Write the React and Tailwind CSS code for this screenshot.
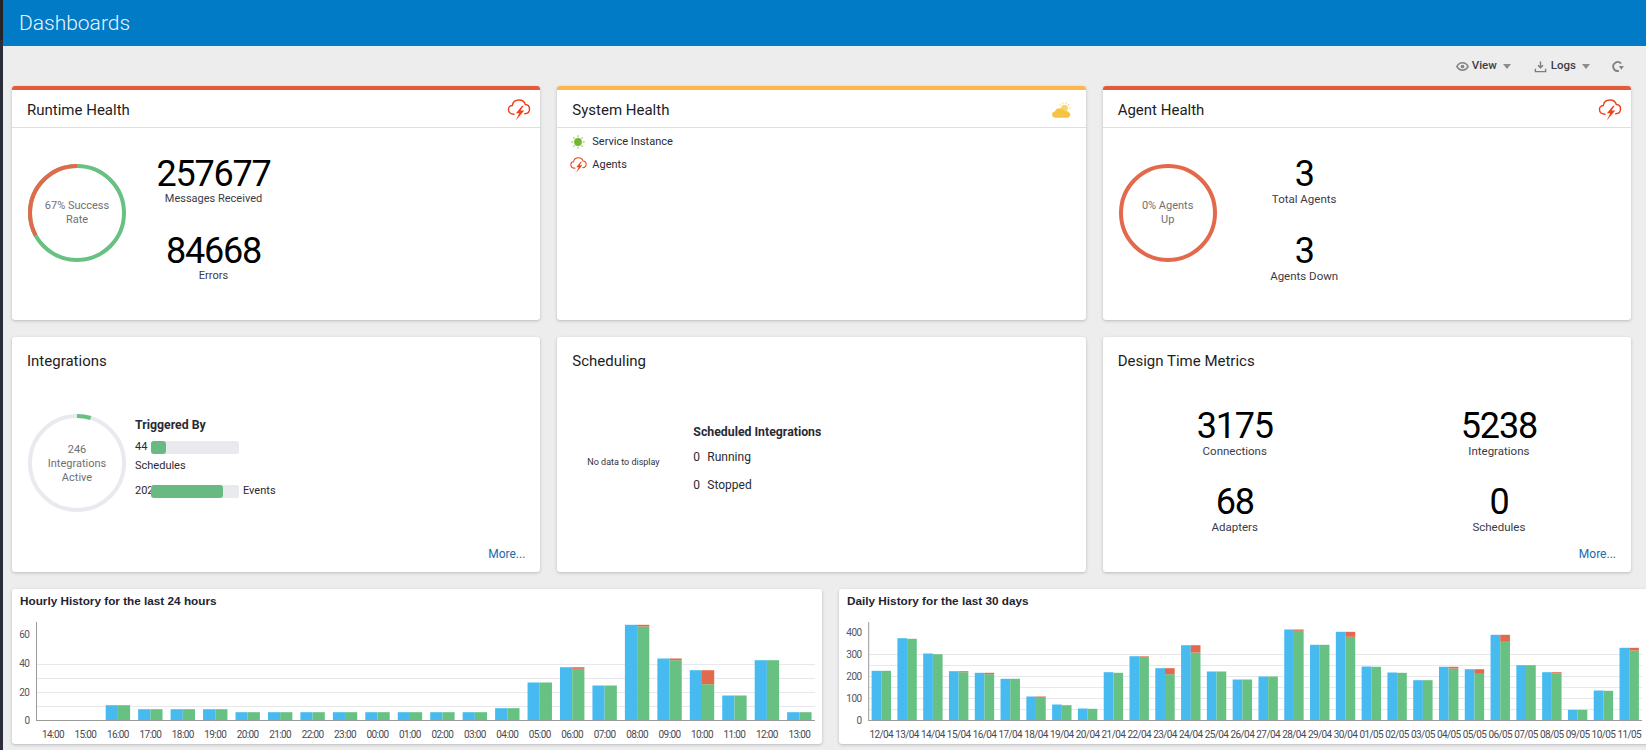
import React from "react";

const RED = "#e3694c", GREEN = "#67c183", BLUE = "#47bbf0";

function CloudBolt({ className = "w-[24px] h-[22px]" }) {
  return (
    <svg viewBox="0 0 24 23" className={className}>
      <path d="M6.8 16C3.5 16 1 14 1 11C1 8.5 3 6.8 5 6.8C5.5 3.2 8.5 1 12 1C15 1 17.8 3 18.6 5.8C21.2 6 23 8 23 10.5C23 13.2 21 15.3 18 15.5" fill="none" stroke="#f0401b" strokeWidth="1.5" strokeLinecap="round" />
      <path d="M15.2 7L8.8 14.8H12.3L8.6 22.5L17.5 12H13.6L16.8 7Z" fill="#f0401b" />
    </svg>
  );
}

function Sun() {
  const rays = [0, 45, 90, 135, 180, 225, 270, 315];
  return (
    <svg viewBox="0 0 14 14" className="w-[14px] h-[14px]">
      <circle cx="7" cy="7" r="3.9" fill="#76b52f" />
      {rays.map((a) => (
        <line key={a} x1="7" y1="0.3" x2="7" y2="2.2" stroke="#a9d27e" strokeWidth="1.3" transform={`rotate(${a} 7 7)`} />
      ))}
    </svg>
  );
}

function CloudSun() {
  const rays = [-50, -18, 15, 48, 85];
  return (
    <svg viewBox="0 0 20 17" className="w-[20px] h-[17px]">
      {rays.map((a) => (
        <line key={a} x1="12.5" y1="0" x2="12.5" y2="2" stroke="#f9dc8e" strokeWidth="1.1" transform={`rotate(${a} 12.5 6.5)`} />
      ))}
      <circle cx="12.5" cy="6.5" r="3.4" fill="#f7d36a" />
      <path d="M3.5 15.8C1.5 15.8 0 14.3 0 12.5C0 10.8 1.3 9.5 3 9.4C3.6 7.4 5.4 6.2 7.5 6.2C9.6 6.2 11.2 7.5 11.9 9.1C14.2 8.6 18 9.4 18.3 12.5C18.4 14.4 17 15.8 15 15.8Z" fill="#f6c343" />
    </svg>
  );
}

function Ring({ segments, track = "#e8eaf0", lines }) {
  const r = 47, c = 2 * Math.PI * r;
  return (
    <div className="relative w-[98px] h-[98px] shrink-0">
      <svg viewBox="0 0 98 98" className="w-[98px] h-[98px] -rotate-90">
        <circle cx="49" cy="49" r={r} fill="none" stroke={track} strokeWidth="4" />
        {segments.map((s, i) => (
          <circle key={i} cx="49" cy="49" r={r} fill="none" stroke={s.color} strokeWidth="4"
            strokeDasharray={`${(s.len / 100) * c} ${c}`} strokeDashoffset={`${-(s.start / 100) * c}`} />
        ))}
      </svg>
      <div className={`absolute inset-0 flex flex-col items-center justify-center text-[11px] leading-[14px] text-[#6f6f73] ${lines.length > 2 ? "pt-[2px]" : ""}`}>
        {lines.map((l) => <span key={l}>{l}</span>)}
      </div>
    </div>
  );
}

function Card({ title, accent, icon, children }) {
  return (
    <section className="flex-1 min-w-0 bg-white rounded-[3px] overflow-hidden flex flex-col shadow-[0_1px_3px_rgba(60,70,90,0.3)]">
      {accent && <div className="h-1 shrink-0" style={{ background: accent }} />}
      {children(title, icon)}
    </section>
  );
}

function Title({ children, icon }) {
  return (
    <header className="h-[38px] shrink-0 pl-[15px] pr-[9px] pt-[3px] flex items-center justify-between border-b border-[#d9e0e8]">
      <h2 className="text-[15px] text-[#1d1d24] font-normal">{children}</h2>
      {icon}
    </header>
  );
}

function Stat({ value, label, small }) {
  return (
    <div className="flex flex-col items-center">
      <span className="text-[36px] leading-[33px] pt-[1px] text-black tracking-[-1.2px]">{value}</span>
      <span className={`leading-[16px] text-[#3b3b45] ${small ? "text-[11px]" : "text-[11.5px]"}`}>{label}</span>
    </div>
  );
}

function HealthCard({ accent, icon, title, ring, stats, small }) {
  return (
    <Card accent={accent} title={title} icon={icon}>
      {(t, ic) => (
        <>
          <Title icon={ic}>{t}</Title>
          <div className="flex-1 flex items-start pl-[16px] pt-[26px]">
            <div className="mt-[10px]">{ring}</div>
            <div className="flex flex-col gap-[27px] ml-[22px] w-[131px] mt-[3px]">
              {stats.map((s) => <Stat key={s.label} value={s.value} label={s.label} small={small} />)}
            </div>
          </div>
        </>
      )}
    </Card>
  );
}

function More() {
  return <a className="absolute right-[15px] bottom-[10px] text-[12px] leading-[16px] text-[#1a6bb0]">More...</a>;
}

function Chart({ title, labels, bars, ticks, grid, axisX, start, step, barW, right, className }) {
  const base = 131.5;
  const toY = (v) => base - v;
  return (
    <section className={`bg-white rounded-[3px] overflow-hidden h-[155px] shadow-[0_1px_3px_rgba(60,70,90,0.3)] relative ${className}`}>
      <h3 className="pl-[8px] pt-[4px] text-[11.75px] leading-[15px] font-bold text-[#1f2430] font-['Liberation_Sans',sans-serif]">{title}</h3>
      <svg width="830" height="155" className="absolute left-0 top-0 pointer-events-none">
        {grid.map((g) => <line key={g} x1={axisX} x2={right} y1={toY(g)} y2={toY(g)} stroke="#e6e8ec" strokeWidth="1" />)}
        {bars.map((b, i) => {
          const cx = start + step * i;
          return (
            <g key={i}>
              <rect x={cx - barW} y={toY(b[0])} width={barW} height={b[0]} fill={BLUE} />
              <rect x={cx} y={toY(b[1])} width={barW} height={b[1]} fill={GREEN} />
              {b[2] > 0 && <rect x={cx} y={toY(b[1] + b[2])} width={barW} height={b[2]} fill={RED} />}
            </g>
          );
        })}
        <line x1={axisX} x2={axisX} y1="33" y2={base + 0.5} stroke="#9a9a9a" strokeWidth="1" />
        <line x1={axisX} x2={right} y1={base} y2={base} stroke="#9a9a9a" strokeWidth="1" />
        {ticks.map((t) => (
          <text key={t.l} x={axisX - 7} y={toY(t.v) + 3} textAnchor="end" fontSize="10" letterSpacing="-0.5" fill="#55555c">{t.l}</text>
        ))}
        {labels.map((l, i) => (
          <text key={l} x={start + step * i} y="149" textAnchor="middle" fontSize="10" letterSpacing="-0.6" fill="#4a4a52">{l}</text>
        ))}
      </svg>
    </section>
  );
}

const hours = ["14:00","15:00","16:00","17:00","18:00","19:00","20:00","21:00","22:00","23:00","00:00","01:00","02:00","03:00","04:00","05:00","06:00","07:00","08:00","09:00","10:00","11:00","12:00","13:00"];
const hourly = [[0,0,0],[0,0,0],[15.3,15.3,0],[11.3,11.3,0],[11.3,11.3,0],[11.3,11.3,0],[8.3,8.3,0],[8.3,8.3,0],[8.3,8.3,0],[8.3,8.3,0],[8.3,8.3,0],[8.3,8.3,0],[8.3,8.3,0],[8.3,8.3,0],[12.3,12.3,0],[38,38,0],[53.3,51.7,1.6],[35,35,0],[95.7,94,1.7],[62,60.3,1.7],[50.3,36.3,14],[25,25,0],[60.3,60.3,0],[8.3,8.3,0]];
const days = ["12/04","13/04","14/04","15/04","16/04","17/04","18/04","19/04","20/04","21/04","22/04","23/04","24/04","25/04","26/04","27/04","28/04","29/04","30/04","01/05","02/05","03/05","04/05","05/05","06/05","07/05","08/05","09/05","10/05","11/05"];
const daily = [[49.7,49.7,0],[82.3,81.7,0],[67,66.3,0],[49.3,48.3,1],[47.7,46.3,1.4],[41.7,41.7,0],[24,22.7,1.3],[16,15.3,0],[12,11.7,0],[48.3,47.7,0],[64.3,63.7,0.6],[52.3,46.3,6],[75.3,68,7.3],[49,49,0],[41,41,0],[44,44,0],[91,89.7,1.3],[75.7,75.7,0],[88.7,83.7,5],[54,53.7,0],[48,47.7,0],[40.3,40.3,0],[53.7,52,1.7],[51.3,46.7,4.6],[85.7,78.7,7],[55.3,55.3,0],[48.3,47.3,1],[10.7,10.7,0],[30,29.7,0],[72.7,70,2.7]];

export default function App() {
  return (
    <div className="h-[750px] w-[1646px] overflow-hidden flex bg-[#ededed] text-[12px] font-['Roboto','Noto_Sans',sans-serif]">
      <div className="w-[3px] shrink-0 flex flex-col">
        <div className="h-[40px] bg-[#242428]" />
        <div className="flex-1 bg-[#2c2d3c]" />
      </div>
      <div className="flex-1 min-w-0 flex flex-col">
        <div className="h-[46px] shrink-0 bg-[#027bc7] pl-[16px] pt-[2px] flex items-center">
          <h1 className="text-[21px] font-light text-white/95">Dashboards</h1>
        </div>

        <div className="h-[40px] shrink-0 flex items-center justify-end pr-[22px] text-[#3d3d45] text-[11.5px] font-medium">
          <svg viewBox="0 0 14 14" className="w-[13px] h-[13px] mr-[3px]"><path d="M1 7C2.5 4.3 4.5 3 7 3S11.5 4.3 13 7C11.5 9.7 9.5 11 7 11S2.5 9.7 1 7Z" fill="none" stroke="#85858a" strokeWidth="1.7" /><circle cx="7" cy="7" r="2" fill="#85858a" /></svg>
          <span>View</span>
          <span className="ml-[6px] w-0 h-0 border-x-[4px] border-x-transparent border-t-[5px] border-t-[#8b8b90]" />
          <svg viewBox="0 0 14 14" className="w-[13px] h-[13px] ml-[23px] mr-[4px]"><path d="M7 1.5V8M4.3 5.6L7 8.4L9.7 5.6M1.5 9.5V12.5H12.5V9.5" fill="none" stroke="#7b7b80" strokeWidth="1.5" /></svg>
          <span>Logs</span>
          <span className="ml-[6px] w-0 h-0 border-x-[4px] border-x-transparent border-t-[5px] border-t-[#8b8b90]" />
          <svg viewBox="0 0 14 14" className="w-[13px] h-[13px] ml-[21px]"><path d="M10.8 3.8A4.8 4.8 0 1 0 8.5 11.6" fill="none" stroke="#808085" strokeWidth="2" /><path d="M8.5 6.5H13.8L11.2 10.5Z" fill="#808085" /></svg>
        </div>

        <div className="pl-[9px] pr-[15px] flex flex-col gap-[17px]">
          <div className="h-[234px] flex gap-[17px]">
            <HealthCard accent="#e2593b" title="Runtime Health" icon={<CloudBolt />} small
              ring={<Ring track={GREEN} segments={[{ color: RED, start: 67, len: 33 }]} lines={["67% Success", "Rate"]} />}
              stats={[{ value: "257677", label: "Messages Received" }, { value: "84668", label: "Errors" }]} />
            <Card accent="#fdb54c" title="System Health" icon={<span className="mr-[5px]"><CloudSun /></span>}>
              {(t, ic) => (
                <>
                  <Title icon={ic}>{t}</Title>
                  <ul className="pl-[14px] pt-[2.5px] text-[11px] text-[#2a2a33]">
                    <li className="h-[23px] flex items-center"><span className="w-[21px]"><Sun /></span>Service Instance</li>
                    <li className="h-[23px] flex items-center"><span className="w-[21px] -ml-[1px] mr-[1px]"><CloudBolt className="w-[17px] h-[16px]" /></span>Agents</li>
                  </ul>
                </>
              )}
            </Card>
            <HealthCard accent="#e2593b" title="Agent Health" icon={<CloudBolt />}
              ring={<Ring track={RED} segments={[]} lines={["0% Agents", "Up"]} />}
              stats={[{ value: "3", label: "Total Agents" }, { value: "3", label: "Agents Down" }]} />
          </div>

          <div className="h-[235px] grid grid-cols-3 gap-[17px]">
            <section className="min-w-0 bg-white rounded-[3px] relative shadow-[0_1px_3px_rgba(60,70,90,0.3)] pl-[15px] pt-[14px]">
              <h2 className="text-[15px] leading-[20px] text-[#1d1d24]">Integrations</h2>
              <div className="flex pl-[1px] mt-[43px]">
                <Ring segments={[{ color: GREEN, start: 0, len: 4.7 }]} lines={["246", "Integrations", "Active"]} />
                <div className="ml-[9px] mt-[3px] text-[11px] text-[#2a2a33]">
                  <div className="font-bold text-[12.3px] leading-[16px]">Triggered By</div>
                  <div className="mt-[8px] flex items-center h-[13px]">
                    <span className="w-[16px] shrink-0">44</span>
                    <span className="w-[88px] h-[13px] bg-[#e8eaed] rounded-[2px] block"><span className="block w-[15px] h-[13px] bg-[#69ba82] rounded-[3px]" /></span>
                  </div>
                  <div className="mt-[3px] leading-[16px] pt-[1px]">Schedules</div>
                  <div className="mt-[11px] flex items-center h-[13px]">
                    <span className="w-[16px] shrink-0 overflow-hidden">202</span>
                    <span className="w-[88px] h-[13px] bg-[#e8eaed] rounded-[2px] block shrink-0"><span className="block w-[72px] h-[13px] bg-[#69ba82] rounded-[3px]" /></span>
                    <span className="ml-[4px]">Events</span>
                  </div>
                </div>
              </div>
              <More />
            </section>

            <section className="min-w-0 bg-white rounded-[3px] shadow-[0_1px_3px_rgba(60,70,90,0.3)] pl-[15px] pt-[14px]">
              <h2 className="text-[15px] leading-[20px] text-[#1d1d24]">Scheduling</h2>
              <div className="flex mt-[53px] pl-[15px] text-[#2a2a33]">
                <div className="w-[106px] pt-[32px] text-[9px] text-[#33333a]">No data to display</div>
                <div>
                  <div className="font-bold text-[12.3px] leading-[16px]">Scheduled Integrations</div>
                  <div className="mt-[9px] h-[16px] flex items-center"><span className="w-[14px]">0</span>Running</div>
                  <div className="mt-[12px] h-[16px] flex items-center"><span className="w-[14px]">0</span>Stopped</div>
                </div>
              </div>
            </section>

            <section className="min-w-0 bg-white rounded-[3px] relative shadow-[0_1px_3px_rgba(60,70,90,0.3)] pt-[14px]">
              <h2 className="pl-[15px] text-[15px] leading-[20px] text-[#1d1d24]">Design Time Metrics</h2>
              <div className="grid grid-cols-2 gap-y-[26px] mt-[38px]">
                <Stat value="3175" label="Connections" />
                <Stat value="5238" label="Integrations" />
                <Stat value="68" label="Adapters" />
                <Stat value="0" label="Schedules" />
              </div>
              <More />
            </section>
          </div>

          <div className="flex gap-[17px] w-[1640px]">
            <Chart className="w-[810px] shrink-0" title="Hourly History for the last 24 hours" labels={hours} bars={hourly}
              ticks={[{ v: 0, l: "0" }, { v: 28, l: "20" }, { v: 56.8, l: "40" }, { v: 85.2, l: "60" }]} grid={[14, 28, 42, 56]}
              axisX={24.5} start={41} step={32.45} barW={12.2} right={803} />
            <Chart className="w-[815px] shrink-0" title="Daily History for the last 30 days" labels={days} bars={daily}
              ticks={[{ v: 0, l: "0" }, { v: 22, l: "100" }, { v: 44, l: "200" }, { v: 66, l: "300" }, { v: 88, l: "400" }]} grid={[11, 22, 33, 44, 55, 66]}
              axisX={29.7} start={42.3} step={25.79} barW={9.7} right={803} />
          </div>
        </div>
      </div>
    </div>
  );
}
